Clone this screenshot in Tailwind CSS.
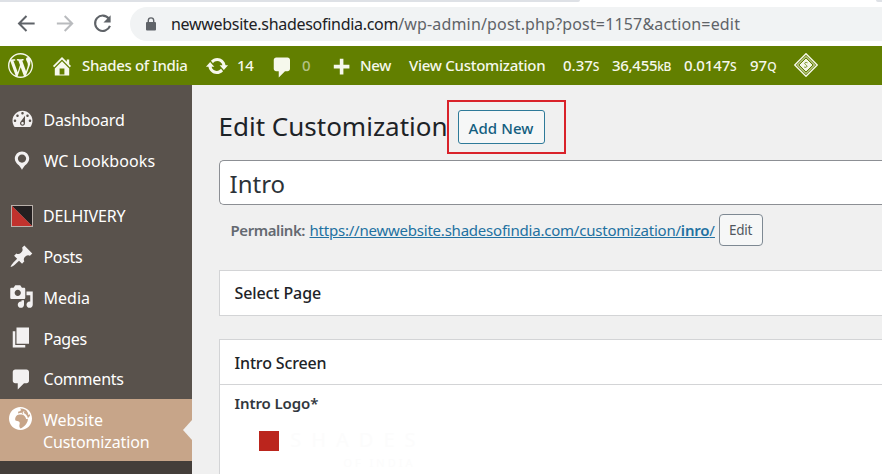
<!DOCTYPE html>
<html lang="en">
<head>
<meta charset="utf-8">
<title>Edit Customization</title>
<script src="https://cdn.jsdelivr.net/npm/@tailwindcss/browser@4"></script>
</head>
<body class="w-[882px] h-[474px] overflow-hidden bg-[#f0f0f0] font-['Noto_Sans','Open_Sans',sans-serif] text-[#1d2327] whitespace-nowrap">
<div class="flex h-[474px] flex-col">
  <!-- Browser toolbar -->
  <div class="relative flex h-[46px] shrink-0 bg-white">
    <div class="absolute left-0 top-0 h-[2px] w-[580px] rounded-br-md bg-[#dee1e6]"></div>
    <div class="absolute left-[876px] top-0 h-[2px] w-[6px] rounded-bl-md bg-[#dee1e6]"></div>
    <div class="flex w-[130px] shrink-0 items-start pt-[12px] pl-[15px] gap-[15px]">
      <svg class="size-[23px] shrink-0" viewBox="0 0 24 24" fill="none" stroke="#5f6368" stroke-width="2.1"><path d="M20.5 12H5M12 4.2 4.2 12 12 19.8"/></svg>
      <svg class="size-[23px] shrink-0" viewBox="0 0 24 24" fill="none" stroke="#b9bbbe" stroke-width="2.1"><path d="M4 12h15.5M12.200 4.200 20 12l-7.800 7.800"/></svg>
      <svg class="size-[23px] shrink-0" viewBox="0 0 24 24" fill="none"><path d="M18.600 6.800A8 8 0 1 0 19.800 14.500" stroke="#5f6368" stroke-width="2.200"/><path d="M20.500 3.500V11H13z" fill="#5f6368"/></svg>
    </div>
    <div class="mt-[7px] flex h-[34px] flex-1 items-center rounded-l-full bg-[#f1f3f4] pl-[16px]">
      <svg class="mr-[15px] h-[14px] w-[10px] shrink-0" viewBox="0 0 10 14"><rect y="5" width="10" height="8.500" rx="1" fill="#5f6368"/><path d="M2.300 5.500V3.600a2.700 2.700 0 0 1 5.400 0v1.900" fill="none" stroke="#5f6368" stroke-width="1.400"/></svg>
      <div class="text-[16px] text-[#5f6368]"><span class="tracking-[-0.29px] text-[#202124]">newwebsite.shadesofindia.com</span><span class="tracking-[0.16px]">/wp-admin/post.php?post=1157&amp;action=edit</span></div>
    </div>
  </div>
  <!-- Admin bar -->
  <div class="flex h-[39px] shrink-0 items-center bg-[#627f00] text-[15px] font-medium text-[#f6f8ec]">
    <div class="flex w-[82px] shrink-0 items-center gap-[17px] pl-[8px]">
      <svg class="size-[25px]" viewBox="0 0 20 20" fill="currentColor"><path d="M20 10c0-5.51-4.49-10-10-10C4.48 0 0 4.49 0 10c0 5.52 4.48 10 10 10 5.51 0 10-4.48 10-10zM7.78 15.37L4.37 6.22c.55-.02 1.17-.08 1.17-.08.5-.06.44-1.13-.06-1.11 0 0-1.45.11-2.37.11-.18 0-.37 0-.58-.01C4.12 2.69 6.87 1.11 10 1.11c2.33 0 4.45.87 6.05 2.34-.68-.11-1.65.39-1.65 1.58 0 .74.45 1.36.9 2.1.35.61.55 1.36.55 2.46 0 1.49-1.4 5-1.4 5l-3.03-8.37c.54-.02.82-.17.82-.17.5-.05.44-1.25-.06-1.22 0 0-1.44.12-2.38.12-.87 0-2.33-.12-2.33-.12-.5-.03-.56 1.2-.06 1.22l.92.08 1.26 3.41zM17.41 10c.24-.64.74-1.87.43-4.25.7 1.29 1.05 2.71 1.05 4.25 0 3.29-1.73 6.24-4.4 7.78.97-2.59 1.94-5.2 2.92-7.78zM6.1 18.09C3.12 16.65 1.11 13.53 1.11 10c0-1.3.23-2.48.72-3.59C3.25 10.3 4.67 14.2 6.1 18.09zm4.03-6.63l2.58 6.98c-.86.29-1.76.45-2.71.45-.79 0-1.57-.11-2.29-.33.81-2.38 1.62-4.74 2.42-7.1z"/></svg>
      <svg class="size-[24px]" viewBox="0 0 20 20" fill="currentColor"><path d="M16 8.5l1.53 1.53-1.06 1.06L10 4.6l-6.47 6.49-1.06-1.06L10 2.5l4 4v-2h2v4zm-6-2.46l6 5.99V18H4v-5.97zM12 17v-5H8v5h4z"/></svg>
    </div>
    <div class="w-[123px] shrink-0 tracking-[-0.33px]">Shades of India</div>
    <div class="w-[32px] shrink-0"><svg class="size-[24px]" viewBox="0 0 20 20" fill="currentColor"><path d="M10.2 3.28c3.53 0 6.43 2.61 6.92 6h2.08l-3.5 4-3.5-4h2.32c-.45-1.97-2.21-3.45-4.32-3.45-1.45 0-2.73.71-3.54 1.78L4.95 5.66C6.23 4.2 8.11 3.28 10.2 3.28zm-.4 13.44c-3.52 0-6.43-2.61-6.92-6H.8l3.5-4c1.17 1.33 2.33 2.67 3.5 4H5.48c.45 1.97 2.21 3.45 4.32 3.45 1.45 0 2.73-.71 3.54-1.78l1.71 1.95c-1.28 1.46-3.15 2.38-5.25 2.38z"/></svg></div>
    <div class="w-[33px] shrink-0 tracking-[-0.3px]">14</div>
    <div class="w-[32px] shrink-0"><svg class="mt-[4px] size-[25px]" viewBox="0 0 20 20" fill="currentColor"><path d="M5 2h9c1.1 0 2 .9 2 2v7c0 1.1-.9 2-2 2h-2l-5 5v-5H5c-1.1 0-2-.9-2-2V4c0-1.1.9-2 2-2z"/></svg></div>
    <div class="w-[27px] shrink-0 text-[#b4c284]">0</div>
    <div class="w-[31px] shrink-0"><svg class="size-[24px]" viewBox="0 0 20 20" fill="currentColor"><path d="M17 9v3h-5v5H9v-5H4V9h5V4h3v5h5z"/></svg></div>
    <div class="w-[49px] shrink-0 tracking-[-0.3px]">New</div>
    <div class="w-[154px] shrink-0 tracking-[-0.26px]">View Customization</div>
    <div class="w-[49px] shrink-0">0.37<span class="text-[12px]">S</span></div>
    <div class="w-[72px] shrink-0 tracking-[-0.3px]">36,455<span class="text-[12px]">kB</span></div>
    <div class="w-[66px] shrink-0 tracking-[-0.15px]">0.0147<span class="text-[12px]">S</span></div>
    <div class="w-[44px] shrink-0">97<span class="text-[12px]">Q</span></div>
    <svg class="mb-[2px] size-[24px] shrink-0" viewBox="0 0 24 24" fill="none" stroke="#f4f6e6"><path d="M12 .8 23.200 12 12 23.200.8 12z" stroke-width="1.500"/><path d="M12 3.500 20.500 12 12 20.500 3.500 12z" stroke-width="1"/><path d="M12 6 18 12 12 18 6 12z" fill="#f4f6e6"/><path d="M13.500 9.800c-2.500-1.200-3.800.7-1.700 2s.9 3.300-1.600 2.200" stroke="#627f00" stroke-width=".9"/></svg>
  </div>
  <div class="flex min-h-0 flex-1">
    <!-- Sidebar menu -->
    <nav class="flex w-[192px] shrink-0 flex-col bg-[#59524c] pt-[14px] text-[16px] text-white">
      <div class="flex h-[41px] shrink-0 items-center gap-[10px] pl-[9.500px]"><svg class="size-[25px] -mr-px text-[#f3f1f1]" viewBox="0 0 20 20" fill="currentColor"><path d="M3.76 16h12.48c1.1-1.37 1.76-3.11 1.76-5 0-4.42-3.58-8-8-8s-8 3.58-8 8c0 1.89.66 3.63 1.76 5zM10 4c.55 0 1 .45 1 1s-.45 1-1 1-1-.45-1-1 .45-1 1-1zM6 6c.55 0 1 .45 1 1s-.45 1-1 1-1-.45-1-1 .45-1 1-1zm8 0c.55 0 1 .45 1 1s-.45 1-1 1-1-.45-1-1 .45-1 1-1zm-5.37 5.55L12 7v6c0 1.1-.9 2-2 2s-2-.9-2-2c0-.57.24-1.08.63-1.45zM4 10c.55 0 1 .45 1 1s-.45 1-1 1-1-.45-1-1 .45-1 1-1zm12 0c.55 0 1 .45 1 1s-.45 1-1 1-1-.45-1-1 .45-1 1-1zm-5 3c0-.55-.45-1-1-1s-1 .45-1 1 .45 1 1 1 1-.45 1-1z"/></svg><span class="tracking-[-0.2px]">Dashboard</span></div>
      <div class="flex h-[41px] shrink-0 items-center gap-[10px] pl-[9.500px]"><svg class="size-[24px] text-[#f3f1f1]" viewBox="0 0 20 20" fill="currentColor"><path d="M10 2C6.69 2 4 4.69 4 8c0 2.02 1.17 3.71 2.53 4.89.43.37 1.18.96 1.85 1.83.74.97 1.41 2.01 1.62 2.71.21-.7.88-1.74 1.62-2.71.67-.87 1.42-1.46 1.85-1.83C14.83 11.71 16 10.02 16 8c0-3.31-2.69-6-6-6zm0 2.56c1.9 0 3.44 1.54 3.44 3.44S11.9 11.44 10 11.44 6.56 9.9 6.56 8 8.1 4.56 10 4.56z"/></svg><span class="tracking-[0.08px]">WC Lookbooks</span></div>
      <div class="mt-[14px] flex h-[41px] shrink-0 items-center gap-[10px] pl-[11px]"><svg class="size-[22px]" viewBox="0 0 22 22"><path d="M0 0h22v22H0z" fill="#b9b0aa"/><path d="M1 1h20v20z" fill="#231f20"/><path d="M1 1v20h20z" fill="#c1322d"/></svg><span class="tracking-[-0.15px]">DELHIVERY</span></div>
      <div class="flex h-[41px] shrink-0 items-center gap-[10px] pl-[9px]"><svg class="size-[25px] -mr-[0.5px] text-[#f3f1f1]" viewBox="0 0 20 20" fill="currentColor"><path d="M10.44 3.02l1.82-1.82 6.36 6.35-1.83 1.82c-1.05-.68-2.48-.57-3.41.36l-.75.75c-.92.93-1.04 2.35-.35 3.41l-1.83 1.82-2.41-2.41-2.8 2.79c-.42.42-3.38 2.71-3.8 2.29s1.86-3.39 2.28-3.81l2.79-2.79L4.1 9.36l1.83-1.82c1.05.69 2.48.57 3.4-.36l.75-.75c.93-.92 1.05-2.35.36-3.41z"/></svg><span class="tracking-[-0.35px]">Posts</span></div>
      <div class="flex h-[41px] shrink-0 items-center gap-[10px] pl-[9px]"><svg class="size-[25px] -mr-[0.5px] mb-[2px] text-[#f3f1f1]" viewBox="0 0 20 20" fill="currentColor"><path d="M13 11V4c0-.55-.45-1-1-1h-1.67L9 1H5L3.67 3H2c-.55 0-1 .45-1 1v7c0 .55.45 1 1 1h10c.55 0 1-.45 1-1zM7 4.5c1.38 0 2.5 1.12 2.5 2.5S8.38 9.5 7 9.5 4.500 8.38 4.500 7 5.62 4.500 7 4.500zM14 6h5v10.500c0 1.38-1.12 2.500-2.500 2.500S14 17.880 14 16.500s1.120-2.500 2.500-2.500c.17 0 .34.02.5.05V9h-3V6zm-4 8.050V13h2v3.500c0 1.380-1.120 2.500-2.500 2.500S7 17.880 7 16.500 8.120 14 9.500 14c.17 0 .34.02.5.05z"/></svg><span>Media</span></div>
      <div class="flex h-[41px] shrink-0 items-center gap-[10px] pl-[9px]"><svg class="size-[25px] -mr-[0.5px] mb-[2px] text-[#f3f1f1]" viewBox="0 0 20 20" fill="currentColor"><path d="M6 15V2h10v13H6zm-1 1h8v2H3V5h2v11z"/></svg><span class="tracking-[-0.4px]">Pages</span></div>
      <div class="flex h-[40px] shrink-0 items-center gap-[10px] pl-[9px]"><svg class="size-[25px] -mr-[0.5px] text-[#f3f1f1]" viewBox="0 0 20 20" fill="currentColor"><path d="M5 2h9c1.1 0 2 .9 2 2v7c0 1.1-.9 2-2 2h-2l-5 5v-5H5c-1.1 0-2-.9-2-2V4c0-1.1.9-2 2-2z"/></svg><span class="tracking-[-0.22px]">Comments</span></div>
      <div class="relative flex h-[62px] shrink-0 gap-[11px] bg-[#c7a589] pt-[8px] pl-[9px]"><svg class="size-[23px] shrink-0" viewBox="0 0 18 18" fill="currentColor"><path d="M9 0C4.03 0 0 4.03 0 9s4.03 9 9 9 9-4.03 9-9-4.03-9-9-9zm7.5 6.48c-.274.896-.908 1.64-1.75 2.05-.45-1.69-1.658-3.074-3.27-3.75.13-.444.41-.83.79-1.09-.43-.28-1-.42-1.34.07-.53.69 0 1.61.21 2v.14c-.555-.337-.99-.84-1.24-1.44-.966-.03-1.922.208-2.76.69-.087-.565-.032-1.142.16-1.68.733.07 1.453-.23 1.92-.8.46-.52-.13-1.18-.59-1.58h.36c1.36-.01 2.702.335 3.89 1 1.36 1.005 2.194 2.57 2.27 4.26.24 0 .7-.55.91-.92.172.34.32.69.44 1.05zM9 16.84c-2.05-2.08.25-3.75-1-5.24-.92-.85-2.29-.26-3.11-1.23-.282-1.473.267-2.982 1.43-3.93.52-.44 4-1 5.42.22.83.715 1.415 1.674 1.67 2.74.46.035.918-.066 1.32-.29.41 2.98-3.15 6.74-5.73 7.73z"/></svg><div class="pt-[2px] leading-[22px]"><span>Website</span><br><span class="tracking-[-0.12px]">Customization</span></div>
        <svg class="absolute right-0 top-[21px] h-[20px] w-[9px]" viewBox="0 0 9 20"><path d="M9 0v20L0 10z" fill="#f0f0f0"/></svg></div>
      <div class="flex-1 bg-[#443e3a]"></div>
    </nav>
    <!-- Editor -->
    <main class="flex min-w-0 flex-1 flex-col pl-[26.500px]">
      <div class="flex h-[75px] shrink-0 items-start pt-[15px]">
        <div class="w-[228px] shrink-0 pt-[6px] text-[26px] leading-[40px]">Edit Customization</div>
        <div class="flex h-[54px] w-[119px] items-start border-2 border-[#d9222a] pt-[8px] pl-[9px]"><div class="flex h-[34px] w-[87px] items-center justify-center rounded-[3px] border border-[#2e7a99] bg-[#f6f7f7] pt-[2px] text-[15px] font-medium tracking-[0.1px] text-[#135e80]">Add New</div></div>
      </div>
      <div class="flex h-[45px] shrink-0 items-center rounded-l-[5px] border border-r-0 border-[#8c8f94] bg-white pt-[2px] pl-[10px] text-[24px] text-[#2c3338]">Intro</div>
      <div class="flex h-[65px] shrink-0 items-start pt-[9px] pl-[12px] text-[15px] text-[#646970]"><div class="flex h-[32px] w-[79px] shrink-0 items-center font-semibold tracking-[-0.42px]">Permalink:</div><div class="flex h-[32px] w-[409px] shrink-0 items-center text-[#2271a1]"><a class="underline"><span class="tracking-[-0.22px]">https://newwebsite.shadesofindia.com/customization/</span><b class="font-semibold tracking-[-0.2px]">inro</b>/</a></div><div class="flex h-[32px] w-[44px] shrink-0 items-center justify-center rounded-[4px] border border-[#7e8993] bg-[#f6f7f7] text-[13.500px] tracking-[-0.3px] text-[#50575e]">Edit</div></div>
      <div class="flex h-[46px] shrink-0 items-center border border-r-0 border-[#d3d4d6] bg-white pl-[15px] text-[16px] font-medium"><span class="tracking-[-0.1px]">Select Page</span></div>
      <div class="mt-[23px] flex flex-1 flex-col border-l border-t border-[#d3d4d6] bg-white">
        <div class="flex h-[45px] shrink-0 items-center border-b border-[#d3d4d6] pt-px pl-[15px] text-[16px] font-medium"><span class="tracking-[-0.15px]">Intro Screen</span></div>
        <div class="flex h-[36px] shrink-0 items-center pt-px pl-[15px] text-[15px] font-semibold text-[#32383e]"><span class="tracking-[-0.1px]">Intro Logo*</span></div>
        <div class="mt-[10px] flex gap-[10px] pl-[39px]">
          <div class="size-[20px] bg-[#bb251d]"></div>
          <div class="-mt-[5px] w-[137px] text-right text-[#fcfcfc]"><div class="text-[20px] leading-[28px] tracking-[10px]">SHADES</div><div class="pr-[10px] text-[11px] leading-[17px] tracking-[3px]">OF INDIA</div></div>
        </div>
      </div>
    </main>
  </div>
</div>
</body>
</html>
